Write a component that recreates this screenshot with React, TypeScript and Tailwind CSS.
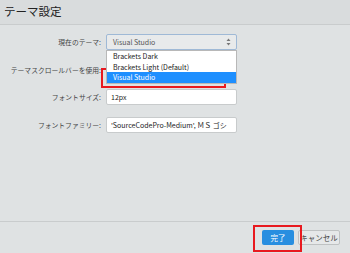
const jp = { fontFamily: '"Noto Sans CJK JP", "Noto Sans", sans-serif' };

export default function App() {
  return (
    <div
      className="relative flex h-[253px] w-[350px] flex-col overflow-hidden bg-[#dfe2e3] text-[#333]"
      style={jp}
    >
      <div className="flex h-[25px] items-center border-b border-[#c9cccd] bg-[#d9dcdd] pl-1">
        <h1 className="text-[11.5px] leading-none text-[#222]">テーマ設定</h1>
      </div>

      <div className="flex flex-1 flex-col gap-[12px] pt-[9px]">
        <div className="flex items-center gap-[5px]">
          <label className="w-[101px] whitespace-nowrap text-right text-[6.8px] text-[#444]">現在のテーマ:</label>
          <div className="relative">
            <div className="flex h-[16px] w-[131px] items-center justify-between rounded-[2px] border border-[#9fb9d6] bg-[#e8eaeb] pl-[6px] pr-[5px] text-[7px] text-[#555]">
              <span>Visual Studio</span>
              <svg width="5" height="8" viewBox="0 0 5 8" className="fill-[#777]">
                <path d="M2.5 0.5 L4.5 3 H0.5 Z" />
                <path d="M2.5 7.5 L4.5 5 H0.5 Z" />
              </svg>
            </div>
            <ul className="absolute left-0 top-[16px] z-10 w-[131px] border border-[#b8b8b8] bg-white text-[7px] leading-[10.5px] text-[#222]">
              <li className="px-[6px]">Brackets Dark</li>
              <li className="px-[6px]">Brackets Light (Default)</li>
              <li className="bg-[#1e8fff] px-[6px] text-white">Visual Studio</li>
            </ul>
          </div>
        </div>

        <div className="flex h-[15px] items-center gap-[5px] pt-[2px]">
          <label className="w-[101px] whitespace-nowrap text-right text-[6.8px] text-[#444]">テーマスクロールバーを使用:</label>
          <input type="checkbox" className="h-[9px] w-[9px]" />
        </div>

        <div className="flex items-center gap-[5px]">
          <label className="w-[101px] whitespace-nowrap text-right text-[6.8px] text-[#444]">フォントサイズ:</label>
          <div className="flex h-[16px] w-[131px] items-center rounded-[2px] border border-[#c8cbcc] bg-white px-[4px] text-[7px] text-[#222]">
            12px
          </div>
        </div>

        <div className="flex items-center gap-[5px]">
          <label className="w-[101px] whitespace-nowrap text-right text-[6.8px] text-[#444]">フォントファミリー:</label>
          <div className="flex h-[16px] w-[131px] items-center overflow-hidden whitespace-nowrap rounded-[2px] border border-[#c8cbcc] bg-white px-[4px] text-[7px] text-[#222]">
            <span className="truncate">'SourceCodePro-Medium', ＭＳ ゴシ</span>
          </div>
        </div>
      </div>

      <div className="flex h-[32px] items-center justify-end gap-[4px] border-t border-[#c9cccd] pr-[10px]">
        <button className="h-[15px] w-[32px] rounded-[2px] bg-[#288ee0] text-[7.5px] text-white">完了</button>
        <button className="h-[15px] w-[42px] rounded-[2px] border border-[#bfc2c3] bg-[#e6e8e9] text-[7.5px] text-[#444]">
          キャンセル
        </button>
      </div>

      <div className="pointer-events-none absolute left-[101px] top-[68px] h-[20px] w-[125px] border-2 border-[#e8191f]" />
      <div className="pointer-events-none absolute left-[253px] top-[225px] h-[27px] w-[49px] border-2 border-[#e8191f]" />
    </div>
  );
}
